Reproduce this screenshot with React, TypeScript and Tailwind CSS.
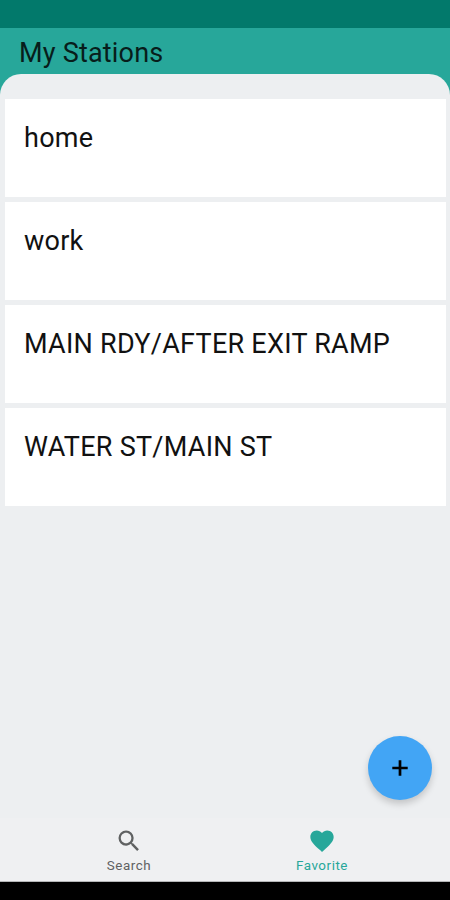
import React from 'react';

type Tab = 'search' | 'favorite';

const stations = ['home', 'work', 'MAIN RDY/AFTER EXIT RAMP', 'WATER ST/MAIN ST'];

const SearchIcon: React.FC = () => (
  <svg viewBox="0 0 24 24" className="h-7 w-7" fill="currentColor" aria-hidden="true">
    <path d="M15.5 14h-.79l-.28-.27A6.47 6.47 0 0 0 16 9.5 6.5 6.5 0 1 0 9.5 16c1.61 0 3.09-.59 4.23-1.57l.27.28v.79l5 4.99L20.49 19l-4.99-5zm-6 0C7.01 14 5 11.99 5 9.5S7.01 5 9.5 5 14 7.01 14 9.5 11.99 14 9.5 14z" />
  </svg>
);

const HeartIcon: React.FC = () => (
  <svg viewBox="0 0 24 24" className="h-7 w-7" fill="currentColor" aria-hidden="true">
    <path d="M12 21.35l-1.45-1.32C5.4 15.36 2 12.28 2 8.5 2 5.42 4.42 3 7.5 3c1.74 0 3.41.81 4.5 2.09C13.09 3.81 14.76 3 16.5 3 19.58 3 22 5.42 22 8.5c0 3.78-3.4 6.86-8.55 11.54L12 21.35z" />
  </svg>
);

const PlusIcon: React.FC = () => (
  <svg viewBox="0 0 16 16" className="h-4 w-4" fill="none" stroke="currentColor" strokeWidth="2.7" aria-hidden="true">
    <path d="M8 .3v15.4M.3 8h15.4" />
  </svg>
);

const tabs: { id: Tab; label: string; icon: React.ReactNode }[] = [
  { id: 'search', label: 'Search', icon: <SearchIcon /> },
  { id: 'favorite', label: 'Favorite', icon: <HeartIcon /> },
];

const App: React.FC = () => {
  const activeTab: Tab = 'favorite';

  return (
    <div className="relative flex h-[900px] w-[450px] flex-col overflow-hidden bg-[#27a79a] font-[Roboto,sans-serif]">
      <div className="h-7 shrink-0 bg-[#02796b]" />
      <header className="flex h-[46px] shrink-0 items-center pt-[3px] pl-[19px]">
        <h1 className="text-[27px] leading-8 tracking-[0.2px] text-[#071d1b]">My Stations</h1>
      </header>

      <main className="flex-1 rounded-t-[21px] bg-[#edeff1] pt-[25px]">
        <ul className="flex flex-col gap-[5px] pr-[4px] pl-[5px]">
          {stations.map((station) => (
            <li key={station} className="h-[98px] bg-white pt-[23px] pl-[19px]">
              <p className="text-[27px] leading-8 tracking-[0.26px] whitespace-nowrap text-[#111]">{station}</p>
            </li>
          ))}
        </ul>
      </main>

      <button
        type="button"
        aria-label="Add station"
        className="absolute top-[736px] left-[368px] flex h-16 w-16 items-center justify-center rounded-full bg-[#42a5f5] text-black shadow-[0_4px_7px_rgba(0,0,0,0.18)]"
      >
        <PlusIcon />
      </button>

      <nav className="flex h-[64px] shrink-0 justify-center border-b border-[#b5b6b7] bg-[#eff0f2]">
        {tabs.map((tab) => (
          <button
            key={tab.id}
            type="button"
            className={`flex w-[193px] flex-col items-center pt-[9px] ${
              tab.id === activeTab ? 'text-[#27a79a]' : 'text-[#5f6162]'
            }`}
          >
            {tab.icon}
            <span className="mt-[3px] pl-px text-[13.4px] leading-4 tracking-[0.55px]">{tab.label}</span>
          </button>
        ))}
      </nav>
      <div className="h-[18px] shrink-0 bg-black" />
    </div>
  );
};

export default App;
